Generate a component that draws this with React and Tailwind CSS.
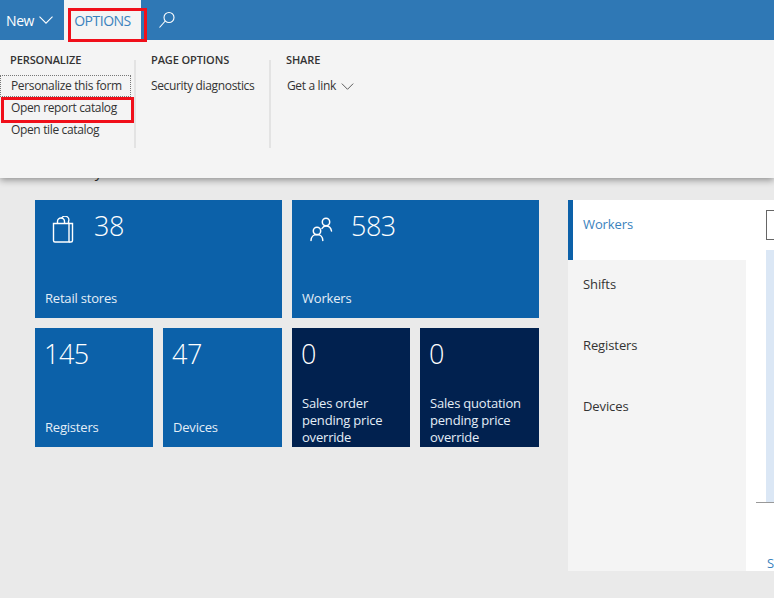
import React from "react";

const font = { fontFamily: '"Open Sans", "Noto Sans", sans-serif' };

function Chevron({ className, stroke = "white" }) {
  return (
    <svg viewBox="0 0 14 8" className={className} fill="none" stroke={stroke} strokeWidth="1.100">
      <path d="M.5.700 7 7.200 13.500.700" />
    </svg>
  );
}

function Tile({ value, label, icon, dark, className, labelClass = "bottom-[11px]" }) {
  return (
    <div className={`relative overflow-hidden text-white ${dark ? "bg-[#01214f]" : "bg-[#0c61a9]"} ${className}`}>
      <div className={`flex items-start pt-[8px] ${icon ? "pl-[16px] gap-[15px]" : "pl-[9px]"}`}>
        {icon && <div className="mt-[8px] w-[28px] h-[28px]">{icon}</div>}
        <span className="text-[27px] leading-[36px] font-light tracking-[-0.5px]">{value}</span>
      </div>
      <div className={`absolute left-[10px] right-[2px] text-[13px] leading-[17px] tracking-[-0.2px] text-[#e4eef7] ${labelClass}`}>
        {label}
      </div>
    </div>
  );
}

function BagIcon() {
  return (
    <svg viewBox="0 0 28 28" className="w-[28px] h-[28px]" fill="none" stroke="white" strokeWidth="1.400">
      <path d="M2.500 7.500h15.500v18.500h-14a1.500 1.500 0 0 1-1.500-1.500z" />
      <path d="M18 7.500h3.500v17a1.500 1.500 0 0 1-1.500 1.500h-2" />
      <path d="M6.500 7.500v-2a3.500 3.500 0 0 1 7 0v2" />
      <path d="M10.500 2.400a3.500 3.500 0 0 1 7 3.100v2" />
    </svg>
  );
}

function PeopleIcon() {
  return (
    <svg viewBox="0 0 28 28" className="w-[28px] h-[28px]" fill="none" stroke="white" strokeWidth="1.500" strokeLinecap="round">
      <circle cx="18" cy="6" r="3.700" />
      <path d="M14 12.500c.8-1.500 2.200-2.500 4-2.500 3 0 5 2 5.500 5" />
      <circle cx="9" cy="15" r="3.700" />
      <path d="M3 24.500c0-3.500 2.500-6 6-6s5.800 2.500 5.800 6" />
    </svg>
  );
}

function SideTab({ label, className }) {
  return <div className={`pl-[15px] text-[13px] leading-[18px] text-[#333] tracking-[-0.1px] ${className}`}>{label}</div>;
}

export default function App() {
  return (
    <div className="relative w-[774px] h-[598px] overflow-hidden bg-[#eaeaea]" style={font}>
      {/* action pane */}
      <div className="relative z-10 shadow-[0_2px_7px_rgba(0,0,0,0.4)]">
        <div className="flex h-[40px] bg-[#2f78b5] text-white">
          <div className="flex items-center gap-[5px] pl-[6px] w-[64px] text-[14px] tracking-[-0.4px]">
            New
            <Chevron className="w-[14px] h-[8px]" />
          </div>
          <div className="flex items-center justify-center w-[77px] bg-[#f4f4f4] text-[#3a82bd] text-[14px] tracking-[-0.5px]">
            OPTIONS
          </div>
          <div className="flex items-center pl-[17px]">
            <svg viewBox="0 0 18 18" className="w-[18px] h-[18px]" fill="none" stroke="white" strokeWidth="1.100">
              <circle cx="11" cy="6.500" r="5" />
              <path d="M7.300 10 1.500 16.500" />
            </svg>
          </div>
        </div>

        <div className="flex h-[138px] bg-[#f4f4f4] text-[#333] text-[12px] tracking-[-0.35px]">
          <div className="w-[136px] mt-[20px] mb-[30px] border-r-2 border-[#e3e3e3]">
            <div className="pl-[10px] -mt-[8px] leading-[16px] font-semibold text-[11px] tracking-[-0.1px]">PERSONALIZE</div>
            <div className="mt-[7px] w-[131px] h-[22px] pl-[10px] leading-[20px] border border-dotted border-[#777]">
              Personalize this form
            </div>
            <div className="w-[131px] h-[22px] pl-[11px] leading-[22px]">Open report catalog</div>
            <div className="w-[131px] h-[22px] pl-[11px] leading-[22px]">Open tile catalog</div>
          </div>
          <div className="w-[135px] mt-[20px] mb-[30px] border-r-2 border-[#e3e3e3]">
            <div className="pl-[15px] -mt-[8px] leading-[16px] font-semibold text-[11px] tracking-[-0.1px]">PAGE OPTIONS</div>
            <div className="mt-[7px] pl-[15px] leading-[22px]">Security diagnostics</div>
          </div>
          <div className="mt-[20px]">
            <div className="pl-[15px] -mt-[8px] leading-[16px] font-semibold text-[11px] tracking-[-0.1px]">SHARE</div>
            <div className="mt-[7px] pl-[16px] leading-[22px] flex items-center gap-[5px]">
              Get a link
              <Chevron className="w-[13px] h-[7px]" stroke="#555" />
            </div>
          </div>
        </div>
      </div>

      {/* page body */}
      <div className="-mt-[16px] pl-[35px]">
        <div className="h-[18px] text-[15px] leading-[18px] text-[#333]">Summary</div>
        <div className="flex mt-[20px]">
          <div className="grid grid-cols-[118px_119px_118px_119px] grid-rows-[118px_119px] gap-[10px]">
            <Tile className="col-span-2" value="38" label="Retail stores" icon={<BagIcon />} />
            <Tile className="col-span-2" value="583" label="Workers" icon={<PeopleIcon />} />
            <Tile value="145" label="Registers" />
            <Tile value="47" label="Devices" />
            <Tile dark value="0" labelClass="bottom-[1px]" label={<>Sales order<br />pending price<br />override</>} />
            <Tile dark value="0" labelClass="bottom-[1px]" label={<>Sales quotation<br />pending price<br />override</>} />
          </div>

          <div className="flex ml-[29px] w-[206px] h-[371px]">
            <div className="w-[178px] bg-[#f4f4f4]">
              <div className="h-[60px] bg-white border-l-[5px] border-[#0c61a9] pt-[15px] pl-[10px] text-[13px] leading-[18px] text-[#3a82bd] tracking-[-0.1px]">
                Workers
              </div>
              <SideTab label="Shifts" className="pt-[15px]" />
              <SideTab label="Registers" className="pt-[43px]" />
              <SideTab label="Devices" className="pt-[43px]" />
            </div>
            <div className="flex-1 bg-white pt-[10px] pl-[10px] overflow-hidden">
              <div className="ml-[10px] h-[30px] border border-r-0 border-[#666]" />
              <div className="ml-[10px] mt-[10px] h-[252px] bg-[#dbe7f5]" />
              <div className="h-px bg-[#999]" />
              <div className="ml-[11px] mt-[51px] text-[13px] leading-[18px] text-[#3a82bd]">S</div>
            </div>
          </div>
        </div>
      </div>

      {/* red callouts */}
      <div className="absolute z-20 left-[68px] top-[8px] w-[79px] h-[34px] border-[3px] border-[#f00f1a]" />
      <div className="absolute z-20 left-[1px] top-[97px] w-[133px] h-[26px] border-[3px] border-[#f00f1a]" />
    </div>
  );
}
